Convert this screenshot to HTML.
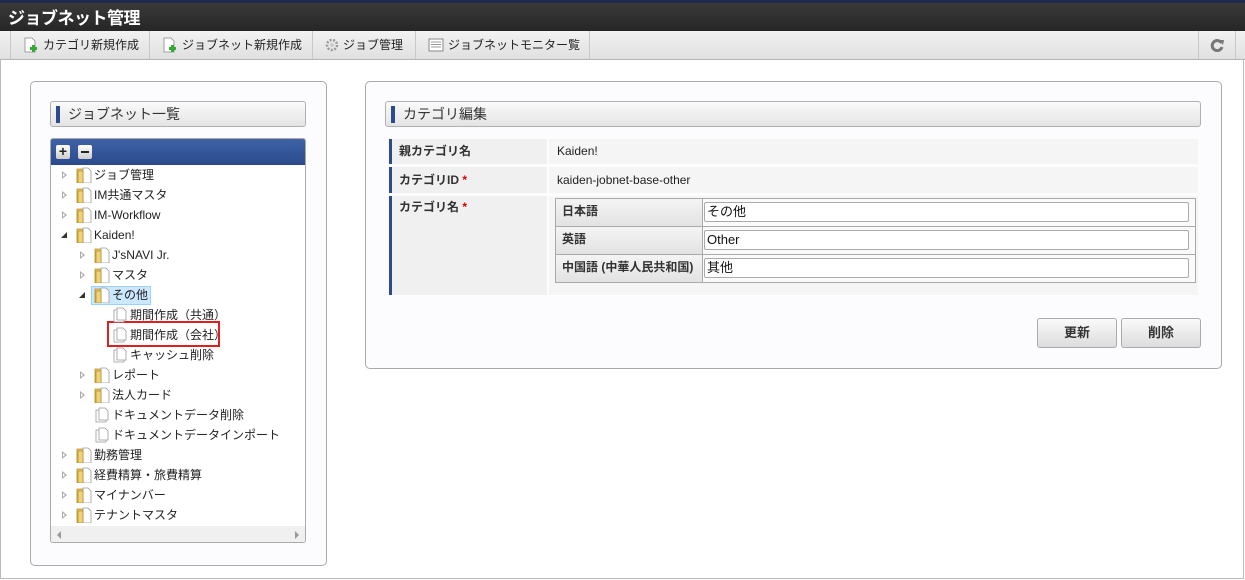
<!DOCTYPE html>
<html><head><meta charset="utf-8"><style>
*{box-sizing:border-box;margin:0;padding:0}
body{width:1245px;height:580px;overflow:hidden;background:#fff;font-family:"Liberation Sans","Noto Sans CJK JP",sans-serif;font-size:12px;color:#333;position:relative}
.abs{position:absolute}
#top{left:0;top:0;width:1245px;height:31px;background:linear-gradient(#3a3a3a,#262626);border-top:3px solid #1e2a4a}
#top span{position:absolute;left:8px;top:1px;color:#fff;font-weight:bold;font-size:17px;letter-spacing:-0.5px}
#tb{left:0;top:31px;width:1245px;height:29px;background:linear-gradient(#f2f2f2,#e0e0e0);border-bottom:1px solid #b5b5b5}
.ti{position:absolute;top:0;height:28px;border-left:1px solid #c8c8c8;font-size:12px;color:#222;line-height:28px;padding-left:12px}
.ti .ic{display:inline-block;vertical-align:middle;margin-right:4px;position:relative;top:-1px}
#frame{left:0;top:60px;width:1244px;height:519px;border-left:1px solid #bbb;border-right:1px solid #bbb;border-bottom:1px solid #bbb}
.panel{border:1px solid #aaa;border-radius:5px;background:#fcfcff}
.hdr{border:1px solid #b0b0b0;border-radius:3px;background:linear-gradient(#fafafa,#e4e4e4);font-size:14px;color:#333;line-height:24px;padding-left:17px}
.hdr:before{content:"";position:absolute;left:5px;top:4px;width:4px;height:17px;background:#2e4a8e}
.tr{position:absolute;height:20px;line-height:20px;font-size:12px;color:#222;white-space:nowrap}
.arr{position:absolute;width:0;height:0;border-top:4px solid transparent;border-bottom:4px solid transparent;border-left:5px solid #aaa;top:6px}
.arr:after{content:"";position:absolute;left:-4px;top:-2px;border-top:2px solid transparent;border-bottom:2px solid transparent;border-left:2px solid #fff}
.open{position:absolute;top:7px;width:0;height:0;border-left:6px solid transparent;border-bottom:6px solid #333}
.fold{position:absolute;top:2px;width:16px;height:16px}
.lbl{border-left:3px solid #2e4a8e;background:#f0f0f0;font-size:12px;font-weight:bold;padding-left:7px;color:#333}
.val{background:#f5f5f5;font-size:12px;padding-left:8px;color:#222}
.il{background:linear-gradient(#f4f4f4,#e2e2e2);border:1px solid #aaa;font-weight:bold;font-size:12px;padding-left:6px;line-height:24px}
.ib{background:#fafafa;border:1px solid #aaa}
.inp{position:absolute;left:1px;top:3px;width:485px;height:20px;border:1px solid #aaa;border-radius:2px;background:#fff;font-size:13px;line-height:18px;padding-left:2px;color:#111}
.btn{border:1px solid #aaa;border-radius:3px;background:linear-gradient(#fafafa,#dcdcdc);text-align:center;line-height:27px;font-size:13px;font-weight:bold;color:#333}
</style></head><body>
<svg width="0" height="0" style="position:absolute"><defs>
<g id="fo"><path d="M1 2h5l1 1h3v13H1z" fill="#e8c460" stroke="#b8902a" stroke-width="0.8"/><path d="M7 1h5l3 3v12H7z" fill="#fff" stroke="#999" stroke-width="0.8"/><path d="M2 4h5v12H2z" fill="#f0d27a" stroke="#b8902a" stroke-width="0.8"/></g>
<g id="fi"><path d="M2 3h7l3 3v9H2z" fill="#fff" stroke="#999" stroke-width="0.8"/><path d="M5 1h6l3 3v9H5z" fill="#fff" stroke="#999" stroke-width="0.8"/></g>
<g id="np"><path d="M2 1h7l3 3v11H2z" fill="#fff" stroke="#888" stroke-width="0.8"/><rect x="7" y="10" width="7" height="3" fill="#3a3"/><rect x="9" y="8" width="3" height="7" fill="#3a3"/></g>
</defs></svg>
<div id="top" class="abs"><span>ジョブネット管理</span></div>
<div id="tb" class="abs">
 <div class="ti" style="left:10px;width:139px"><svg class="ic" width="16" height="16"><use href="#np"/></svg>カテゴリ新規作成</div>
 <div class="ti" style="left:149px;width:163px"><svg class="ic" width="16" height="16"><use href="#np"/></svg>ジョブネット新規作成</div>
 <div class="ti" style="left:312px;width:103px"><svg class="ic" width="14" height="14"><circle cx="7" cy="7" r="5" fill="none" stroke="#999" stroke-width="2.5" stroke-dasharray="2 1.5"/><circle cx="7" cy="7" r="2" fill="#ccc"/></svg>ジョブ管理</div>
 <div class="ti" style="left:415px;width:175px;border-right:1px solid #c8c8c8"><svg class="ic" width="16" height="14"><rect x="1" y="1" width="14" height="12" fill="#fff" stroke="#888"/><path d="M3 4h10M3 6.5h10M3 9h10" stroke="#999"/></svg>ジョブネットモニター覧</div>
 <div class="ti" style="left:1198px;width:38px;border-right:1px solid #c8c8c8;padding:0"><svg style="position:absolute;left:11px;top:7px" width="14" height="14"><path d="M11.5 5A5 5 0 1 0 12 9" fill="none" stroke="#777" stroke-width="3"/><path d="M9 2l5 0l-1 5z" fill="#777"/></svg></div>
</div>
<div id="frame" class="abs"></div>

<div class="abs panel" style="left:30px;top:81px;width:297px;height:485px"></div>
<div class="abs hdr" style="left:50px;top:101px;width:256px;height:26px">ジョブネット一覧</div>
<div class="abs" style="left:50px;top:138px;width:256px;height:405px;border:1px solid #aaa;border-radius:3px;background:#fff;overflow:hidden">
 <div style="height:26px;background:linear-gradient(#3f62a8,#2a4a8c)">
  <div style="position:absolute;left:5px;top:6px;width:14px;height:14px;border-radius:2px;background:linear-gradient(#fff,#ccc);font:bold 14px/13px 'Liberation Sans';text-align:center;color:#222">+</div>
  <div style="position:absolute;left:27px;top:6px;width:14px;height:14px;border-radius:2px;background:linear-gradient(#fff,#ccc)"><div style="position:absolute;left:3px;top:6px;width:8px;height:2px;background:#222"></div></div>
 </div>
 <div style="position:absolute;left:0;top:387px;width:254px;height:17px;background:#f0f0f0"><div style="position:absolute;left:6px;top:5px;border-top:4px solid transparent;border-bottom:4px solid transparent;border-right:4px solid #999"></div><div style="position:absolute;right:6px;top:5px;border-top:4px solid transparent;border-bottom:4px solid transparent;border-left:4px solid #999"></div></div>
</div>
<div class="abs" style="left:91px;top:286px;width:60px;height:19px;background:#cce8ff;border:1px solid #99d1ff"></div>
<div class="abs" style="left:107px;top:321px;width:113px;height:26px;border:2px solid #e02020"></div>
<div class="tr" style="left:60px;top:165px"><span class="arr" style="left:2px"></span><svg class="fold" style="left:16px"><use href="#fo"/></svg><span style="position:absolute;left:34px">ジョブ管理</span></div>
<div class="tr" style="left:60px;top:185px"><span class="arr" style="left:2px"></span><svg class="fold" style="left:16px"><use href="#fo"/></svg><span style="position:absolute;left:34px">IM共通マスタ</span></div>
<div class="tr" style="left:60px;top:205px"><span class="arr" style="left:2px"></span><svg class="fold" style="left:16px"><use href="#fo"/></svg><span style="position:absolute;left:34px">IM-Workflow</span></div>
<div class="tr" style="left:60px;top:225px"><span class="open" style="left:1px"></span><svg class="fold" style="left:16px"><use href="#fo"/></svg><span style="position:absolute;left:34px">Kaiden!</span></div>
<div class="tr" style="left:78px;top:245px"><span class="arr" style="left:2px"></span><svg class="fold" style="left:16px"><use href="#fo"/></svg><span style="position:absolute;left:34px">J'sNAVI Jr.</span></div>
<div class="tr" style="left:78px;top:265px"><span class="arr" style="left:2px"></span><svg class="fold" style="left:16px"><use href="#fo"/></svg><span style="position:absolute;left:34px">マスタ</span></div>
<div class="tr" style="left:78px;top:285px"><span class="open" style="left:1px"></span><svg class="fold" style="left:16px"><use href="#fo"/></svg><span style="position:absolute;left:34px">その他</span></div>
<div class="tr" style="left:112px;top:305px"><svg class="fold" style="left:0"><use href="#fi"/></svg><span style="position:absolute;left:18px">期間作成（共通）</span></div>
<div class="tr" style="left:112px;top:325px"><svg class="fold" style="left:0"><use href="#fi"/></svg><span style="position:absolute;left:18px">期間作成（会社）</span></div>
<div class="tr" style="left:112px;top:345px"><svg class="fold" style="left:0"><use href="#fi"/></svg><span style="position:absolute;left:18px">キャッシュ削除</span></div>
<div class="tr" style="left:78px;top:365px"><span class="arr" style="left:2px"></span><svg class="fold" style="left:16px"><use href="#fo"/></svg><span style="position:absolute;left:34px">レポート</span></div>
<div class="tr" style="left:78px;top:385px"><span class="arr" style="left:2px"></span><svg class="fold" style="left:16px"><use href="#fo"/></svg><span style="position:absolute;left:34px">法人カード</span></div>
<div class="tr" style="left:94px;top:405px"><svg class="fold" style="left:0"><use href="#fi"/></svg><span style="position:absolute;left:18px">ドキュメントデータ削除</span></div>
<div class="tr" style="left:94px;top:425px"><svg class="fold" style="left:0"><use href="#fi"/></svg><span style="position:absolute;left:18px">ドキュメントデータインポート</span></div>
<div class="tr" style="left:60px;top:445px"><span class="arr" style="left:2px"></span><svg class="fold" style="left:16px"><use href="#fo"/></svg><span style="position:absolute;left:34px">勤務管理</span></div>
<div class="tr" style="left:60px;top:465px"><span class="arr" style="left:2px"></span><svg class="fold" style="left:16px"><use href="#fo"/></svg><span style="position:absolute;left:34px">経費精算・旅費精算</span></div>
<div class="tr" style="left:60px;top:485px"><span class="arr" style="left:2px"></span><svg class="fold" style="left:16px"><use href="#fo"/></svg><span style="position:absolute;left:34px">マイナンバー</span></div>
<div class="tr" style="left:60px;top:505px"><span class="arr" style="left:2px"></span><svg class="fold" style="left:16px"><use href="#fo"/></svg><span style="position:absolute;left:34px">テナントマスタ</span></div>

<div class="abs panel" style="left:365px;top:81px;width:857px;height:288px"></div>
<div class="abs hdr" style="left:385px;top:101px;width:816px;height:26px">カテゴリ編集</div>
<div class="abs lbl" style="left:389px;top:139px;width:158px;height:25px;line-height:25px">親カテゴリ名</div>
<div class="abs val" style="left:549px;top:139px;width:649px;height:25px;line-height:25px">Kaiden!</div>
<div class="abs lbl" style="left:389px;top:167px;width:158px;height:26px;line-height:26px">カテゴリID <span style="color:#d00">*</span></div>
<div class="abs val" style="left:549px;top:167px;width:649px;height:26px;line-height:26px">kaiden-jobnet-base-other</div>
<div class="abs lbl" style="left:389px;top:196px;width:158px;height:99px;line-height:22px">カテゴリ名 <span style="color:#d00">*</span></div>
<div class="abs val" style="left:549px;top:196px;width:649px;height:99px"></div>
<div class="abs il" style="left:555px;top:198px;width:148px;height:29px">日本語</div>
<div class="abs ib" style="left:702px;top:198px;width:494px;height:29px"><div class="inp">その他</div></div>
<div class="abs il" style="left:555px;top:226px;width:148px;height:29px">英語</div>
<div class="abs ib" style="left:702px;top:226px;width:494px;height:29px"><div class="inp">Other</div></div>
<div class="abs il" style="left:555px;top:254px;width:148px;height:29px">中国語 (中華人民共和国)</div>
<div class="abs ib" style="left:702px;top:254px;width:494px;height:29px"><div class="inp">其他</div></div>
<div class="abs btn" style="left:1037px;top:318px;width:80px;height:30px">更新</div>
<div class="abs btn" style="left:1121px;top:318px;width:80px;height:30px">削除</div>
</body></html>
